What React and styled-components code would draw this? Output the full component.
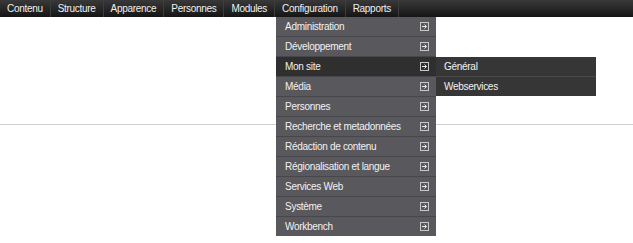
import React from "react";
import styled, { createGlobalStyle } from "styled-components";

const Global = createGlobalStyle`
  html, body { margin: 0; padding: 0; background: #fff; }
  body {
    font-family: "Liberation Sans", Arial, sans-serif;
    font-size: 10px;
    letter-spacing: -0.3px;
  }
`;

const Page = styled.div`
  position: relative;
  width: 633px;
  height: 243px;
  overflow: hidden;
`;

const Toolbar = styled.nav`
  display: flex;
  height: 17px;
  background: linear-gradient(#393939, #151515);
  position: relative;
  z-index: 2;
`;

const TopItem = styled.div`
  position: relative;
  display: flex;
  align-items: center;
  padding: 0 7px;
  border-right: 1px solid #3c3c3c;
  color: #f0f0f0;
  line-height: 17px;
  white-space: nowrap;
`;

const Content = styled.div`
  height: 107px;
  border-bottom: 1px solid #cfcfcf;
`;

const Dropdown = styled.ul`
  position: absolute;
  top: 17px;
  left: 1px;
  width: 160px;
  margin: 0;
  padding: 0;
  list-style: none;
  background: #59585d;
`;

const SubMenu = styled.ul`
  position: absolute;
  top: 0;
  left: 160px;
  width: 160px;
  margin: 0;
  padding: 0;
  list-style: none;
  background: #363636;
`;

const MenuItem = styled.li`
  position: relative;
  display: flex;
  align-items: center;
  justify-content: space-between;
  height: 19px;
  padding: 0 7px 0 9px;
  border-bottom: 1px solid ${(p) => (p.$dark ? "#4a4a4a" : "#47464b")};
  background: ${(p) => (p.$active ? "#2f2f2f" : "transparent")};
  color: #f2f2f2;
  white-space: nowrap;
  &:last-child { border-bottom: none; }
`;

const SubItem = styled(MenuItem)`
  padding-left: 8px;
`;

const Arrow = () => (
  <svg width="9" height="9" viewBox="0 0 9 9" style={{ display: "block" }}>
    <rect x="0.5" y="0.5" width="8" height="8" fill="none" stroke="#c8c8c8" strokeWidth="1" />
    <path d="M2 4.5H6.5M4.5 2.5L6.5 4.5L4.5 6.5" fill="none" stroke="#e8e8e8" strokeWidth="1" />
  </svg>
);

const top = ["Contenu", "Structure", "Apparence", "Personnes", "Modules", "Configuration", "Rapports"];
const items = [
  "Administration",
  "Développement",
  "Mon site",
  "Média",
  "Personnes",
  "Recherche et metadonnées",
  "Rédaction de contenu",
  "Régionalisation et langue",
  "Services Web",
  "Système",
  "Workbench",
];

export default function App() {
  return (
    <Page>
      <Global />
      <Toolbar>
        {top.map((t) => (
          <TopItem key={t}>
            {t}
            {t === "Configuration" && (
              <Dropdown>
                {items.map((it) => (
                  <MenuItem key={it} $active={it === "Mon site"}>
                    <span>{it}</span>
                    <Arrow />
                    {it === "Mon site" && (
                      <SubMenu>
                        <SubItem $dark>Général</SubItem>
                        <SubItem $dark>Webservices</SubItem>
                      </SubMenu>
                    )}
                  </MenuItem>
                ))}
              </Dropdown>
            )}
          </TopItem>
        ))}
      </Toolbar>
      <Content />
    </Page>
  );
}
